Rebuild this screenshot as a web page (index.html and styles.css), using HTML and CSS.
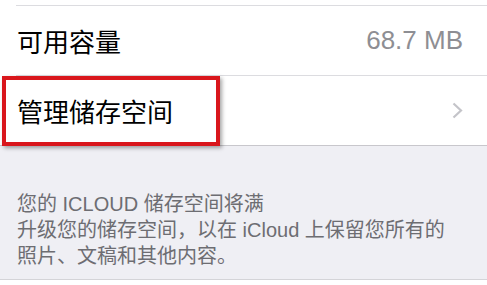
FILE: index.html
```html
<!DOCTYPE html>
<html lang="zh-CN">
<head>
    <meta charset="UTF-8">
    <meta name="viewport" content="width=device-width, initial-scale=1.0">
    <title>iCloud 储存空间</title>
    <link rel="stylesheet" href="styles.css">
</head>
<body>
    <div class="group">
        <div class="cell cell-prev">
            <div class="cell-inner"></div>
        </div>
        <div class="cell">
            <div class="cell-inner">
                <span class="label">可用容量</span>
                <span class="value">68.7 MB</span>
            </div>
        </div>
        <div class="cell">
            <div class="cell-inner">
                <span class="label">管理储存空间</span>
                <svg class="chevron" width="11" height="17" viewBox="0 0 11 17">
                    <path d="M1.5 1.5 L9 8.5 L1.5 15.5" fill="none" stroke="#c4c4c9" stroke-width="2.2"/>
                </svg>
            </div>
            <div class="highlight"></div>
        </div>
    </div>
    <div class="footer">
        <div class="footer-title">您的 ICLOUD 储存空间将满</div>
        <div class="footer-text">升级您的储存空间，以在 iCloud 上保留您所有的照片、文稿和其他内容。</div>
    </div>
</body>
</html>
```

FILE: styles.css
```css
body {
    margin: 0;
    background: #fff;
    font-family: "Liberation Sans", "Noto Sans CJK SC", sans-serif;
}

.group {
    background: #fff;
    border-bottom: 1px solid #c8c7cc;
}

.cell {
    position: relative;
}

.cell-inner {
    margin-left: 16px;
    padding-right: 24px;
    height: 69px;
    display: flex;
    align-items: center;
    justify-content: space-between;
    border-top: 1px solid #dcdce0;
}

.cell-prev .cell-inner {
    height: 5px;
    border-top: none;
    border-bottom: 1px solid #dcdce0;
}

.cell-prev + .cell .cell-inner {
    border-top: none;
}

.label {
    margin-left: 1px;
    font-size: 26px;
    color: #000;
}

.value {
    font-size: 26px;
    color: #8e8e93;
}

.chevron {
    display: block;
}

/* 标注框 */
.highlight {
    position: absolute;
    left: 2px;
    top: 1px;
    width: 218px;
    height: 70px;
    box-sizing: border-box;
    border: 4px solid #d9161c;
    box-shadow: 2px 2px 4px rgba(0, 0, 0, 0.35);
}

.footer {
    background: #efeff4;
    padding: 45px 25px 10px 17px;
    border-bottom: 1px solid #d4d4d8;
    font-size: 20px;
    line-height: 26px;
    color: #6d6d72;
}
```
